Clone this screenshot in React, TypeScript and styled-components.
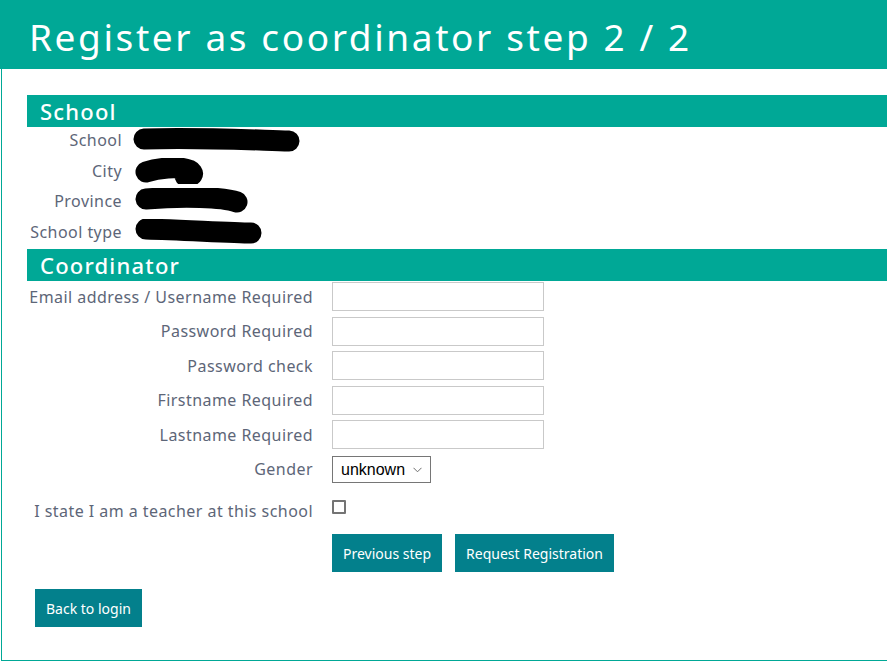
import React from "react";
import styled, { createGlobalStyle } from "styled-components";

const TEAL = "#00a896";
const BTN = "#03808c";
const LABEL = "#5d6678";

const Global = createGlobalStyle`
  html, body { margin: 0; padding: 0; background: #fff; }
  body { font-family: "Noto Sans", "Open Sans", sans-serif; overflow: hidden; }
  * { box-sizing: border-box; }
`;

const Page = styled.div`
  width: 887px;
  height: 662px;
  display: flex;
  flex-direction: column;
`;

const Header = styled.header`
  height: 69px;
  background: ${TEAL};
  display: flex;
  align-items: center;
  padding: 3px 0 0 29px;
  flex-shrink: 0;
`;

const Title = styled.h1`
  margin: 0;
  color: #fff;
  font-family: "Noto Sans", sans-serif;
  font-weight: 400;
  font-size: 37px;
  letter-spacing: 2.6px;
  line-height: 1;
  white-space: nowrap;
`;

const Body = styled.main`
  flex: 1;
  margin-left: 1px;
  margin-bottom: 1px;
  border-left: 1px solid ${TEAL};
  border-bottom: 1px solid ${TEAL};
  padding: 26px 0 0 25px;
  display: flex;
  flex-direction: column;
`;

const SectionBar = styled.h2`
  margin: 0;
  height: 32px;
  background: ${TEAL};
  color: #fff;
  font-family: "Noto Sans", sans-serif;
  font-weight: 500;
  font-size: 22px;
  letter-spacing: 1.2px;
  line-height: 32px;
  padding-left: 13px;
  flex-shrink: 0;
`;

const InfoGrid = styled.div`
  display: grid;
  grid-template-columns: 95px auto;
  column-gap: 11px;
  grid-auto-rows: 30.5px;
  align-items: center;
  margin-top: -2.25px;
  padding-bottom: 2.25px;
`;

const Label = styled.div`
  color: ${LABEL};
  font-size: 16px;
  letter-spacing: 0.45px;
  line-height: 22px;
  text-align: right;
  white-space: nowrap;
`;

const Redacted = styled.svg`
  display: block;
`;

const FormGrid = styled.div`
  display: grid;
  grid-template-columns: 286px 212px;
  column-gap: 19px;
  row-gap: 5.5px;
  align-items: center;
  padding-top: 1px;
`;

const TextInput = styled.input`
  width: 212px;
  height: 29px;
  border: 1px solid #c9c9c9;
  background: #fff;
  margin: 0;
  padding: 2px 6px;
  outline: none;
`;

const SelectWrap = styled.span`
  position: relative;
  justify-self: start;
  margin-top: 1.5px;
  display: block;
  width: 99px;
  height: 27px;
`;

const Select = styled.select`
  appearance: none;
  width: 99px;
  height: 27px;
  border: 1px solid #767676;
  border-radius: 0;
  background: #fff;
  font-family: "Liberation Sans", Arial, sans-serif;
  font-size: 16px;
  color: #000;
  padding: 0 0 0 8px;
  margin: 0;
  outline: none;
`;

const Chevron = styled.svg`
  position: absolute;
  right: 9px;
  top: 11px;
  pointer-events: none;
`;

const CheckLabel = styled(Label)`
  align-self: start;
  margin-top: 11.5px;
`;

const Check = styled.span`
  align-self: start;
  justify-self: start;
  margin-top: 11.5px;
  width: 14px;
  height: 14px;
  border: 2px solid #747474;
  border-radius: 1px;
  background: #fff;
`;

const Buttons = styled.div`
  grid-column: 2;
  display: flex;
  gap: 13px;
  margin-top: 6.5px;
  white-space: nowrap;
`;

const Button = styled.button`
  background: ${BTN};
  color: #fff;
  border: none;
  height: 38px;
  padding: 0 11px;
  margin: 0;
  font-family: "Noto Sans", sans-serif;
  font-size: 14px;
  letter-spacing: 0;
  cursor: pointer;
  flex-shrink: 0;
`;

const Footer = styled.div`
  padding: 17px 0 0 8px;
`;

const blobs: Record<string, { w: number; d: string }> = {
  school: { w: 170, d: "M11 12 C 60 10, 120 13, 156 14" },
  city: { w: 72, d: "M13 14 C 25 10, 45 8, 56 12 C 62 15, 60 19, 52 18" },
  province: { w: 118, d: "M13 11 C 50 8, 90 9, 104 14" },
  type: { w: 132, d: "M13 10 C 50 11, 100 14, 118 14" },
};

const Blob = ({ k }: { k: string }) => {
  const b = blobs[k];
  return (
    <Redacted width={b.w} height={26} viewBox={`0 0 ${b.w} 26`}>
      <path d={b.d} stroke="#000" strokeWidth={21} strokeLinecap="round" strokeLinejoin="round" fill="none" />
    </Redacted>
  );
};

export default function App() {
  const info: [string, string][] = [
    ["School", "school"],
    ["City", "city"],
    ["Province", "province"],
    ["School type", "type"],
  ];
  const fields = [
    "Email address / Username Required",
    "Password Required",
    "Password check",
    "Firstname Required",
    "Lastname Required",
  ];
  return (
    <Page>
      <Global />
      <Header>
        <Title>Register as coordinator step 2 / 2</Title>
      </Header>
      <Body>
        <SectionBar>School</SectionBar>
        <InfoGrid>
          {info.map(([l, k]) => (
            <React.Fragment key={k}>
              <Label>{l}</Label>
              <Blob k={k} />
            </React.Fragment>
          ))}
        </InfoGrid>
        <SectionBar>Coordinator</SectionBar>
        <FormGrid>
          {fields.map((f) => (
            <React.Fragment key={f}>
              <Label>{f}</Label>
              <TextInput type={f.startsWith("Password") ? "password" : "text"} />
            </React.Fragment>
          ))}
          <Label>Gender</Label>
          <SelectWrap>
            <Select defaultValue="unknown">
              <option>unknown</option>
              <option>male</option>
              <option>female</option>
            </Select>
            <Chevron width="9" height="6" viewBox="0 0 9 6">
              <path d="M0.5 0.8 L4.5 4.8 L8.5 0.8" stroke="#6d6d6d" strokeWidth="1" fill="none" />
            </Chevron>
          </SelectWrap>
          <CheckLabel>I state I am a teacher at this school</CheckLabel>
          <Check />
          <Buttons>
            <Button>Previous step</Button>
            <Button>Request Registration</Button>
          </Buttons>
        </FormGrid>
        <Footer>
          <Button>Back to login</Button>
        </Footer>
      </Body>
    </Page>
  );
}
